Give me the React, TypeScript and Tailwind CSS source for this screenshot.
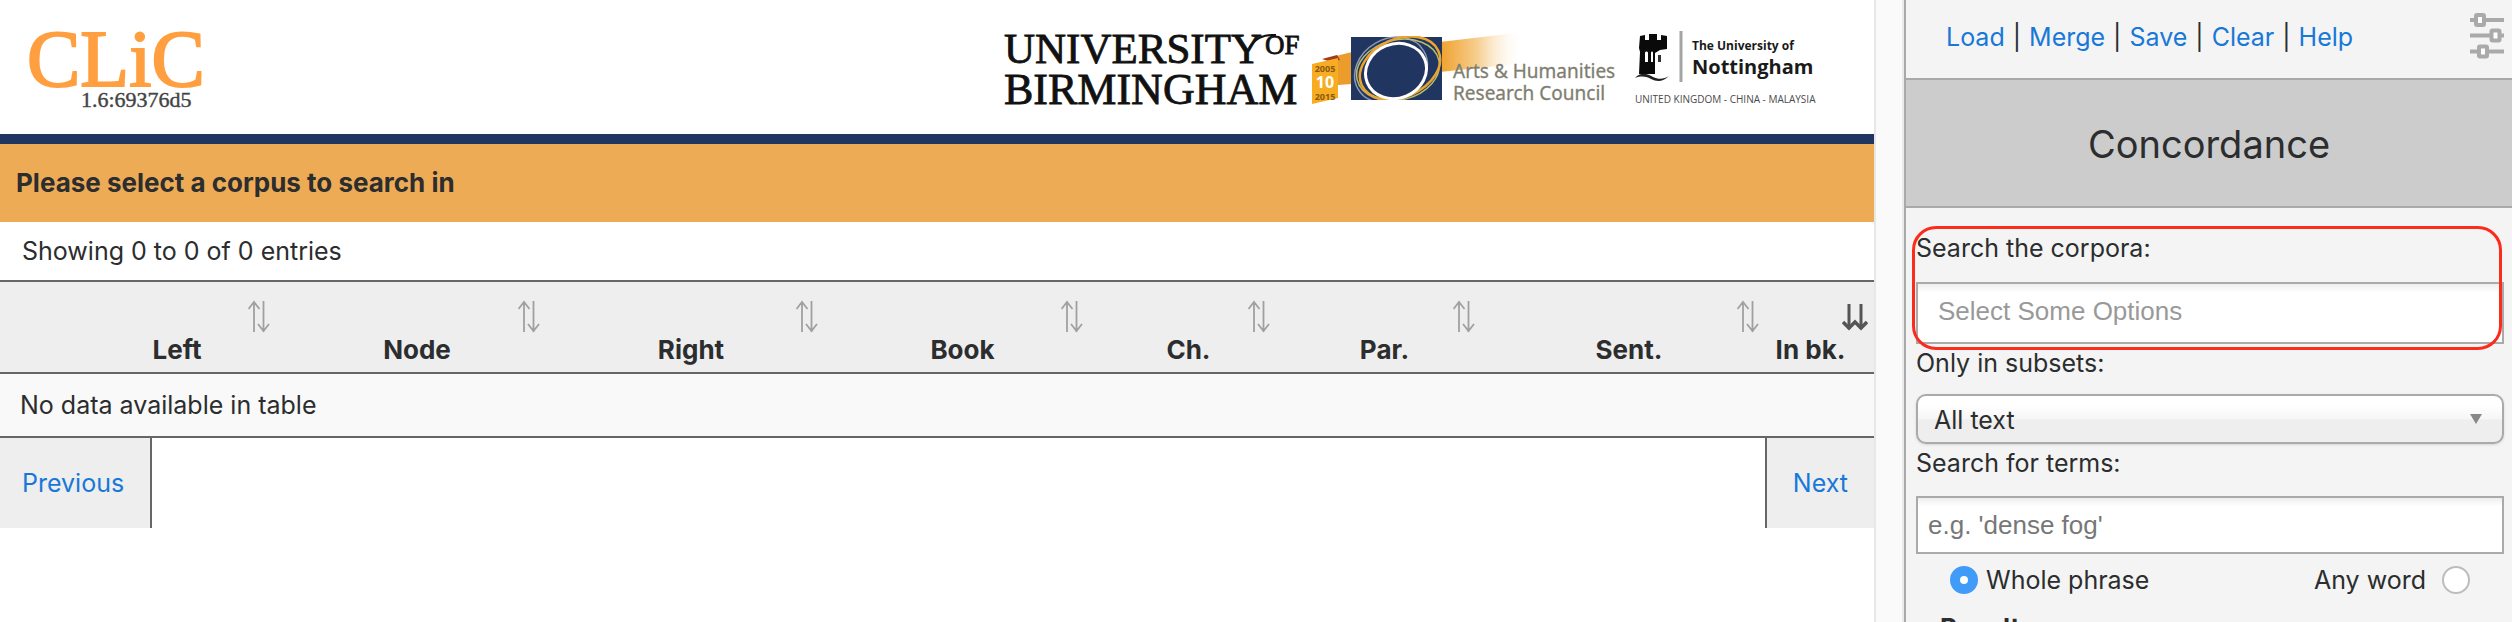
import React from 'react';

const columns = [
  { label: 'Left', active: false },
  { label: 'Node', active: false },
  { label: 'Right', active: false },
  { label: 'Book', active: false },
  { label: 'Ch.', active: false },
  { label: 'Par.', active: false },
  { label: 'Sent.', active: false },
  { label: 'In bk.', active: true },
];

const links = ['Load', 'Merge', 'Save', 'Clear', 'Help'];

function ClicLogo() {
  return (
    <svg width="200" height="130" viewBox="0 0 200 130" role="img" aria-label="CLiC">
      <g fontFamily="'Liberation Serif', serif">
        <text x="3" y="86" fontSize="80" fill="#ff9f40" stroke="#ff9f40" strokeWidth="2">CLiC</text>
        <text x="57" y="107" fontSize="22" fill="#444444" stroke="#444444" strokeWidth="0.4">1.6:69376d5</text>
      </g>
    </svg>
  );
}

function PartnerLogos() {
  return (
    <svg width="830" height="130" viewBox="1000 0 830 130" className="shrink-0" role="img" aria-label="University of Birmingham, Arts and Humanities Research Council, University of Nottingham">
      <defs>
        <linearGradient id="beam" x1="0" x2="1" y1="0" y2="0">
          <stop offset="0" stopColor="#f0a12c" />
          <stop offset="0.45" stopColor="#f6cf91" />
          <stop offset="1" stopColor="#ffffff" stopOpacity="0" />
        </linearGradient>
        <clipPath id="ahrcBox">
          <rect x="1342" y="36" width="108" height="64" />
        </clipPath>
      </defs>

      <g fontFamily="'Liberation Serif', serif" fill="#111111" stroke="#111111" strokeWidth="0.8">
        <text x="1004" y="63" fontSize="43">UNIVERSITY</text>
        <text x="1265" y="54" fontSize="27">OF</text>
        <text x="1004" y="104" fontSize="44">BIRMINGHAM</text>
        <path d="M1249 48C1255 39 1262 34 1276 35" fill="none" strokeWidth="2" />
      </g>

      <path d="M1440 42L1524 32L1516 64L1440 72Z" fill="url(#beam)" />
      <path d="M1336 56L1352 52V84L1338 85Z" fill="#eb9c2b" />
      <path d="M1322 59L1337 55L1340 60L1328 61Z" fill="#a33a1e" />
      <path d="M1312 64L1338 58V98L1312 104Z" fill="#f8ac21" />
      <g fontFamily="'Open Sans', sans-serif" fontWeight="700" textAnchor="middle">
        <text x="1325" y="72" fontSize="9" fill="#8a5a13">2005</text>
        <text x="1325" y="88" fontSize="16" fill="#ffffff">10</text>
        <text x="1325" y="100" fontSize="9" fill="#8a5a13">2015</text>
      </g>
      <rect x="1351" y="37" width="91" height="63" fill="#20355f" />
      <g fill="none" clipPath="url(#ahrcBox)">
        <ellipse cx="1391" cy="70" rx="38" ry="31" stroke="#8d97b5" strokeWidth="1.5" transform="rotate(-30 1391 70)" />
        <ellipse cx="1398" cy="70" rx="42" ry="30" stroke="#b7bd6b" strokeWidth="1.5" transform="rotate(-14 1398 70)" />
        <ellipse cx="1400" cy="68" rx="42" ry="29" stroke="#eda42f" strokeWidth="2.5" transform="rotate(-24 1400 68)" />
        <ellipse cx="1396" cy="71" rx="31" ry="27" stroke="#ffffff" strokeWidth="3" transform="rotate(-22 1396 71)" />
      </g>
      <g fontFamily="'Noto Sans', sans-serif" fontSize="19" fill="#7f7e70" stroke="#7f7e70" strokeWidth="0.3">
        <text x="1453" y="78">Arts &amp; Humanities</text>
        <text x="1453" y="100">Research Council</text>
      </g>

      <path
        d="M1640 36L1645 35V40H1649V34H1657V40H1661V35L1667 36V49L1660 50L1655 53V74H1639L1640 52L1639 48Z"
        fill="#0a0a0a"
      />
      <path d="M1645 53C1645 51 1648 51 1648 53V62H1645Z" fill="#ffffff" />
      <path d="M1651 53C1651 51 1653 51 1653 53V62H1651Z" fill="#ffffff" />
      <path d="M1658 55H1661V62H1658Z" fill="#333333" />
      <path d="M1635 78C1641 71 1648 74 1653 77C1659 80 1664 79 1669 76C1663 82 1657 82 1651 79C1645 76 1641 76 1635 78Z" fill="#222222" />
      <path d="M1681 31V82" stroke="#a5a5a5" strokeWidth="3" />
      <g fontFamily="'Open Sans', sans-serif" fill="#1a1a1a">
        <text x="1692" y="50" fontSize="12" fontWeight="700">The University of</text>
        <text x="1692" y="74" fontSize="20" fontWeight="700">Nottingham</text>
        <text x="1635" y="103" fontSize="10" fill="#4a4a4a">UNITED KINGDOM - CHINA - MALAYSIA</text>
      </g>
    </svg>
  );
}

function SortIcon({ active }: { active: boolean }) {
  return active ? (
    <svg width="26" height="34" viewBox="0 0 26 34" fill="none" stroke="#555555" strokeWidth="3">
      <path d="M7 4V29M19 4V29" />
      <path d="M1 22L7 28L13 22L19 28L25 22" strokeWidth="3.5" />
    </svg>
  ) : (
    <svg width="22" height="34" viewBox="0 0 22 34" fill="none" stroke="#a0a0a0" strokeWidth="1.8">
      <path d="M6 32V2M0.5 9L6 2L11.5 9" />
      <path d="M15.500 1V32M10 24L15.500 31L21 24" />
    </svg>
  );
}

function SlidersIcon() {
  return (
    <svg width="34" height="48" viewBox="0 0 34 48" fill="none" stroke="#aaaaaa" strokeWidth="4">
      <path d="M0 8H5M14 8H34M0 23.500H20M30 23.500H34M0 39.500H8M17 39.500H34" />
      <g fill="#ffffff">
        <rect x="6" y="3" width="8" height="10" rx="1" />
        <rect x="21.500" y="18.500" width="8" height="10" rx="1" />
        <rect x="9" y="34.500" width="8" height="10" rx="1" />
      </g>
    </svg>
  );
}

function Radio({ id, checked }: { id: string; checked?: boolean }) {
  return (
    <input
      type="radio"
      id={id}
      name="match"
      defaultChecked={checked}
      className="size-7 shrink-0 appearance-none rounded-full border-2 border-[#bdbdbd] bg-white checked:border-[10px] checked:border-[#419bf9]"
    />
  );
}

export default function App() {
  return (
    <div className="flex h-screen overflow-hidden bg-white font-['Inter',sans-serif] text-[25px] leading-8 text-[#2b2d2e]">
      <main className="min-w-0 flex-1">
        <header className="flex h-36 items-start justify-between border-b-[10px] border-[#20355f] pr-11 pl-6">
          <ClicLogo />
          <PartnerLogos />
        </header>
        <div className="bg-[#eeab56] px-4 py-[23px] text-[26px] leading-8 font-bold">Please select a corpus to search in</div>
        <p className="px-[22px] pt-[13px] pb-[13px]">Showing 0 to 0 of 0 entries</p>
        <table className="w-full table-fixed border-collapse">
          <colgroup>
            <col className="w-[72px]" />
            <col className="w-[210px]" />
            <col className="w-[270px]" />
            <col className="w-[278px]" />
            <col className="w-[265px]" />
            <col className="w-[187px]" />
            <col className="w-[205px]" />
            <col className="w-[284px]" />
            <col className="w-[103px]" />
          </colgroup>
          <thead>
            <tr className="border-y-2 border-[#666666] bg-[#eeeeee]">
              <td />
              {columns.map((c) => (
                <th key={c.label} scope="col" className="p-0 pt-[18px] pb-1.5 text-[26px] leading-8 font-bold whitespace-nowrap">
                  <div className={c.active ? 'flex justify-end pr-1.5' : 'flex justify-end pr-3'}>
                    <SortIcon active={c.active} />
                  </div>
                  <div className={c.active ? 'pr-6' : ''}>{c.label}</div>
                </th>
              ))}
            </tr>
          </thead>
          <tbody>
            <tr className="border-b-2 border-[#666666] bg-[#f9f9f9]">
              <td colSpan={9} className="px-5 py-[15px]">No data available in table</td>
            </tr>
          </tbody>
        </table>
        <nav className="flex justify-between text-[#1878d8]">
          <a href="#previous" className="border-r-2 border-[#666666] bg-[#eeeeee] py-[29px] pr-[26px] pl-[22px]">Previous</a>
          <a href="#next" className="border-l-2 border-[#666666] bg-[#eeeeee] py-[29px] pr-[26px] pl-[26px]">Next</a>
        </nav>
      </main>

      <div className="w-[30px] shrink-0 border-x-2 border-l-[#e7e7e7] border-r-[#ebebeb] bg-[#fafafa]" />

      <aside className="w-[608px] shrink-0 border-l-2 border-[#a9a9a9] bg-[#f4f4f4]">
        <div className="flex h-20 items-start justify-between border-b-2 border-[#a9a9a9] pt-3 pr-2 pl-10">
          <nav className="flex gap-2 pt-[9px]">
            {links.map((l, i) => (
              <React.Fragment key={l}>
                {i > 0 && <span>|</span>}
                <a href={'#' + l.toLowerCase()} className="text-[#1878d8]">{l}</a>
              </React.Fragment>
            ))}
          </nav>
          <button type="button" aria-label="Settings">
            <SlidersIcon />
          </button>
        </div>
        <h1 className="border-b-2 border-[#a9a9a9] bg-[#cccccc] pt-[41px] pb-[39px] text-center text-[38px] leading-[46px]">Concordance</h1>

        <form className="pt-6 pr-2 pl-2.5">
          <div className="relative">
            <label htmlFor="corpora" className="block pb-[18px]">Search the corpora:</label>
            <input
              id="corpora"
              type="text"
              placeholder="Select Some Options"
              className="block h-[62px] w-full border-2 border-[#aaaaaa] bg-white bg-linear-to-b from-[#eeeeee] to-white to-15% pb-[3px] pl-5 font-['Liberation_Sans',sans-serif] text-[26px] placeholder:text-[#999999]"
            />
            <div className="pointer-events-none absolute -top-1.5 right-0.5 -bottom-1.5 -left-1 rounded-3xl border-[3px] border-[#fb2c1d]" />
          </div>
          <label htmlFor="subsets" className="block pt-[3px] pb-[15px]">Only in subsets:</label>
          <div className="relative">
            <select
              id="subsets"
              className="block h-[50px] w-full appearance-none rounded-[10px] border-2 border-[#aaaaaa] bg-linear-to-b from-white from-20% via-[#f6f6f6] to-[#eeeeee] to-52% pt-0.5 pl-4 shadow-sm"
            >
              <option>All text</option>
            </select>
            <svg width="12" height="10" viewBox="0 0 12 10" className="pointer-events-none absolute top-5 right-[22px]">
              <path d="M0 0H12L6 10Z" fill="#888888" />
            </svg>
          </div>
          <label htmlFor="terms" className="block pt-[3px] pb-[17px]">Search for terms:</label>
          <input
            id="terms"
            type="text"
            placeholder="e.g. 'dense fog'"
            className="block h-[58px] w-full border-2 border-[#aaaaaa] bg-white bg-linear-to-b from-[#eeeeee] to-white to-15% pl-2.5 font-['Liberation_Sans',sans-serif] text-[26px] placeholder:text-[#777777]"
          />
          <div className="flex justify-between pt-2.5 pr-[34px] pl-[34px]">
            <div className="flex items-center gap-2">
              <Radio id="whole" checked />
              <label htmlFor="whole">Whole phrase</label>
            </div>
            <div className="flex items-center gap-4">
              <label htmlFor="any">Any word</label>
              <Radio id="any" />
            </div>
          </div>
          <h2 className="pt-4 pl-6 text-[26px] leading-8 font-bold">Results</h2>
        </form>
      </aside>
    </div>
  );
}
